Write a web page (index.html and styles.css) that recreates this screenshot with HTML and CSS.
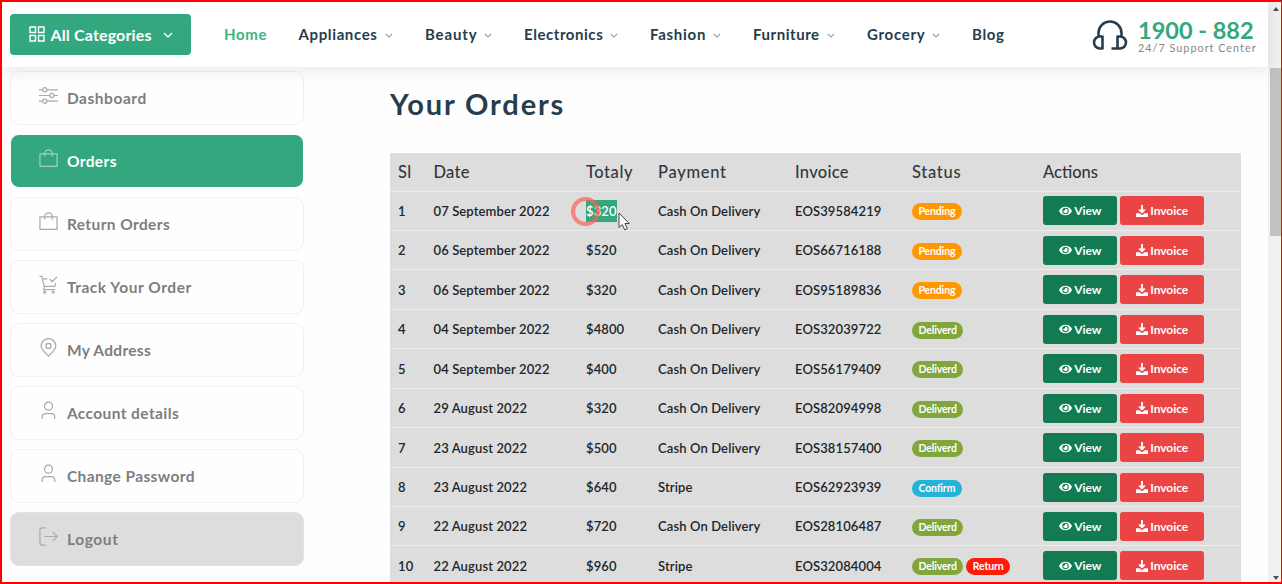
FILE: index.html
```
<!DOCTYPE html>
<html lang="en">
<head>
<meta charset="utf-8">
<title>Your Orders</title>
<link rel="stylesheet" href="styles.css">
</head>
<body>
<svg class="defs" aria-hidden="true">
  <symbol id="chev" viewBox="0 0 10 6"><path d="M1 1l4 4 4-4"/></symbol>
  <symbol id="bag" viewBox="0 0 20 20"><path d="M1 5.200h18v13.200H1zM6 8V4.800a4 4 0 0 1 8 0V8"/></symbol>
  <symbol id="user" viewBox="0 0 20 20"><circle cx="10" cy="5.400" r="4.200"/><path d="M3.400 19v-2.200q0-3.600 3.600-3.600h6q3.600 0 3.600 3.600V19"/></symbol>
  <symbol id="eye" viewBox="0 0 576 512"><path d="M572.500 241.400C518.300 135.600 410.900 64 288 64S57.700 135.600 3.500 241.400a32.400 32.400 0 0 0 0 29.200C57.700 376.400 165.100 448 288 448s230.300-71.600 284.500-177.400a32.400 32.400 0 0 0 0-29.200zM288 400a144 144 0 1 1 144-144 143.900 143.900 0 0 1-144 144zm0-240a95.300 95.300 0 0 0-25.300 3.800 47.900 47.900 0 0 1-66.900 66.900A95.800 95.800 0 1 0 288 160z"/></symbol>
  <symbol id="down" viewBox="0 0 512 512"><path d="M216 0h80v190h88c18 0 27 21 14 34L273 349c-9 9-25 9-34 0L114 224c-13-13-4-34 14-34h88zM0 352h150l55 50c28 27 74 27 102 0l55-50h150v136q0 24-24 24H24q-24 0-24-24z"/></symbol>
</svg>
<div class="page">
  <div class="main">
    <header class="header">
      <button class="categories">
        <svg class="grid-icon" viewBox="0 0 16 16"><path d="M1 1h5.500v5.500H1zM9.500 1H15v5.500H9.500zM1 9.500h5.500V15H1zM9.500 9.500H15V15H9.500z"/></svg>
        <span>All Categories</span><svg class="chev chev-lg"><use href="#chev"/></svg>
      </button>
      <nav class="nav">
        <a class="active ls6">Home</a>
        <a class="ls6">Appliances<svg class="chev"><use href="#chev"/></svg></a>
        <a class="ls8">Beauty<svg class="chev"><use href="#chev"/></svg></a>
        <a class="ls5">Electronics<svg class="chev"><use href="#chev"/></svg></a>
        <a class="ls7">Fashion<svg class="chev"><use href="#chev"/></svg></a>
        <a class="ls5">Furniture<svg class="chev"><use href="#chev"/></svg></a>
        <a class="ls7">Grocery<svg class="chev"><use href="#chev"/></svg></a>
        <a class="ls6">Blog</a>
      </nav>
      <div class="support">
        <svg class="headset" viewBox="0 0 36 32"><path d="M6.500 16.500V13a11.500 11.500 0 0 1 23 0v3.500M10.500 16.500v12H8a6 6 0 0 1 0-12zM25.500 28.500v-12H28a6 6 0 0 1 0 12H19.500"/></svg>
        <div class="support-text"><strong>1900 - 882</strong><small>24/7 Support Center</small></div>
      </div>
    </header>
    <div class="content">
      <aside class="menu">
        <a class="ls5"><svg viewBox="0 0 20 20"><path d="M0 4h3.800M8.200 4H20M0 10h11.300M15.700 10H20M0 16h3.800M8.200 16H20"/><circle cx="6" cy="4" r="2.200"/><circle cx="13.500" cy="10" r="2.200"/><circle cx="6" cy="16" r="2.200"/></svg>Dashboard</a>
        <a class="current ls4"><svg><use href="#bag"/></svg>Orders</a>
        <a class="ls4"><svg><use href="#bag"/></svg>Return Orders</a>
        <a class="ls5"><svg viewBox="0 0 20 20"><path d="M.5 1.500H3L5.500 12h11l1.300-4M3.600 4h5.200M11.500 4.500l2.500 2.400L19 2M5.500 12l-.6 3.300h12"/><circle cx="6" cy="18" r="1"/><circle cx="15" cy="18" r="1"/></svg>Track Your Order</a>
        <a class="ls3"><svg viewBox="0 0 20 20"><path d="M10 19C7 16 2.300 12 2.300 8.300a7.700 7.700 0 0 1 15.400 0C17.700 12 13 16 10 19z"/><circle cx="10" cy="8.300" r="2.700"/></svg>My Address</a>
        <a class="ls4"><svg><use href="#user"/></svg>Account details</a>
        <a class="ls4"><svg><use href="#user"/></svg>Change Password</a>
        <a class="logout ls6"><svg viewBox="0 0 20 20"><path d="M7 1H3.500Q1 1 1 3.500v13Q1 19 3.500 19H7M5.500 10H19M14.500 5.300L19.200 10l-4.700 4.700"/></svg>Logout</a>
      </aside>
      <section class="orders">
        <h1>Your Orders</h1>
        <table>
          <colgroup><col class="c1"><col class="c2"><col class="c3"><col class="c4"><col class="c5"><col class="c6"><col class="c7"></colgroup>
          <thead><tr><th class="ls5">Sl</th><th class="ls3">Date</th><th class="ls5">Totaly</th><th class="ls7">Payment</th><th class="ls3">Invoice</th><th class="ls7">Status</th><th>Actions</th></tr></thead>
          <tbody id="rows"></tbody>
        </table>
      </section>
    </div>
  </div>
  <div class="scrollbar"><i class="up"></i><i class="thumb"></i><i class="dn"></i></div>
  <i class="click-ring"></i>
  <svg class="cursor" viewBox="0 0 12 19"><path d="M1 1v14.500l3.300-3 2.400 5.400 2.600-1.200-2.400-5.200h4.400z"/></svg>
</div>
<script src="orders.js"></script>
</body>
</html>
```
FILE: styles.css
```
* { box-sizing: border-box; }
body { margin: 0; overflow: hidden; font-family: Lato, "Liberation Sans", sans-serif; }
.defs { position: absolute; width: 0; height: 0; }
svg { fill: none; stroke: currentColor; flex: none; }
.ls3 { letter-spacing: .3px; } .ls4 { letter-spacing: .4px; } .ls5 { letter-spacing: .55px; }
.ls6 { letter-spacing: .63px; } .ls7 { letter-spacing: .72px; } .ls8 { letter-spacing: .85px; }
.page { position: relative; width: 1282px; height: 584px; border: solid #f00; border-width: 2px 1px 2px 2px; display: flex; overflow: hidden; background: #fefefe; }
.main { width: 1266px; }
.header { position: relative; height: 65px; display: flex; align-items: center; background: #fff; box-shadow: 0 2px 16px rgba(60,50,80,.13); }
.categories { width: 181px; height: 41px; margin-left: 8px; padding: 0 0 1px 19px; border: 0; border-radius: 4px; background: #33a77d; color: #fff; display: flex; align-items: center; font: 700 16px Lato, sans-serif; letter-spacing: .15px; }
.grid-icon { width: 16px; height: 16px; margin-right: 5.500px; stroke-width: 1.400; }
.categories span { width: 102px; text-align: left; white-space: nowrap; }
.chev { width: 8px; height: 5px; color: #8d949c; stroke-width: 1.300; margin-top: 4px; }
.chev-lg { width: 10px; height: 6px; color: #fff; margin-left: 10px; margin-top: 2px; }
.nav { margin: 0 0 2px 33px; display: grid; grid-template-columns: 74.500px 126.500px 99px 126px 103px 114px 105px 60px; color: #253d4e; font-size: 15px; font-weight: 700; }
.nav a { display: flex; align-items: center; gap: 7px; white-space: nowrap; }
.nav .active { color: #3bb77e; }
.support { margin-left: 60px; display: flex; align-items: center; }
.headset { width: 36px; height: 32px; margin-top: 2px; color: #253d4e; stroke-width: 2.600; stroke-linejoin: round; }
.support-text { margin: -1px 0 0 10px; display: flex; flex-direction: column; white-space: nowrap; }
.support strong { font-size: 23.500px; line-height: 26px; color: #33a77d; }
.support small { font-size: 10.800px; line-height: 9px; letter-spacing: 1.020px; color: #888; }
.content { display: flex; }
.menu { width: 294px; margin: 4px 0 0 8.400px; display: flex; flex-direction: column; gap: 9.500px; }
.menu a { height: 53.500px; border: 1px solid #f2f0f2; border-radius: 9px; padding: 1px 0 0 27.500px; display: flex; align-items: center; color: #7e7e7e; font-size: 15.500px; font-weight: 700; white-space: nowrap; }
.menu svg { width: 19px; height: 19px; margin: -6px 9px 0 0; color: #aaa; stroke-width: 1.300; }
.menu .current { background: #33a77d; border-color: #fefefe; color: #fff; }
.menu .current svg { color: #98d3bd; }
.menu .logout { background: #ddd; border-color: #e2e2e2; }
.orders { margin-left: 85.600px; }
h1 { margin: 18px 0 30.500px; font-size: 29px; line-height: 37px; font-weight: 700; letter-spacing: 1.850px; color: #253d4e; }
table { width: 851px; table-layout: fixed; border-collapse: separate; border-spacing: 0; background: #ddd; color: #212529; }
.c1 { width: 35.500px; } .c2 { width: 152.500px; } .c3 { width: 72px; } .c4 { width: 137px; } .c5 { width: 117px; } .c6 { width: 131px; } .c7 { width: 206px; }
th, td { padding: 0 8px; text-align: left; white-space: nowrap; border-bottom: 1px solid #ececec; }
th { height: 39px; font-size: 16.500px; font-weight: 500; color: #34383c; }
td { height: 39.450px; padding-top: .5px; font-size: 13px; font-weight: 600; letter-spacing: .12px; }
.status, .actions { display: flex; gap: 3px; }
.status { padding-top: 2px; }
.badge { height: 17px; padding: 0 6.500px; border-radius: 9px; color: #fff; font-size: 10.500px; line-height: 17px; font-weight: 700; letter-spacing: -.15px; }
.btn { height: 29px; width: 83.500px; border-radius: 3px; color: #fff; background: #ea4444; display: flex; align-items: center; justify-content: center; gap: 2px; font-size: 12px; font-weight: 700; letter-spacing: -.05px; }
.btn.view { width: 74.500px; background: #127b52; }
.btn svg { width: 12px; height: 12px; fill: currentColor; stroke: none; }
.btn.view svg { width: 13px; }
.pending { background: #ff9800; } .deliverd { background: #80a63c; } .confirm { background: #24b3da; } .return { background: #ff1a0a; }
.selected { background: #33a77d; color: #fff; display: inline-block; height: 22px; line-height: 22px; }
.scrollbar { width: 13px; background: #f1f1f1; display: flex; flex-direction: column; align-items: center; }
.scrollbar i { display: block; }
.up { border: solid transparent; border-width: 0 3.500px 4px; border-bottom-color: #505050; margin: 5px 0 57px 2px; }
.thumb { width: 11px; height: 168px; background: #c1c1c1; margin-left: 2px; }
.dn { border: solid transparent; border-width: 4px 3.500px 0; border-top-color: #505050; margin: auto 0 2px 2px; }
.click-ring { position: absolute; left: 569px; top: 195px; width: 29px; height: 29px; border: 4px solid rgba(246,100,88,.72); border-radius: 50%; filter: blur(.7px); }
.cursor { position: absolute; left: 616px; top: 210px; width: 12px; height: 19px; fill: #fff; color: #444; }
```
FILE: orders.js
```
const D = 'Cash On Delivery';
const orders = [
  ['07 September 2022', '$320', D, 'EOS39584219', ['Pending']],
  ['06 September 2022', '$520', D, 'EOS66716188', ['Pending']],
  ['06 September 2022', '$320', D, 'EOS95189836', ['Pending']],
  ['04 September 2022', '$4800', D, 'EOS32039722', ['Deliverd']],
  ['04 September 2022', '$400', D, 'EOS56179409', ['Deliverd']],
  ['29 August 2022', '$320', D, 'EOS82094998', ['Deliverd']],
  ['23 August 2022', '$500', D, 'EOS38157400', ['Deliverd']],
  ['23 August 2022', '$640', 'Stripe', 'EOS62923939', ['Confirm']],
  ['22 August 2022', '$720', D, 'EOS28106487', ['Deliverd']],
  ['22 August 2022', '$960', 'Stripe', 'EOS32084004', ['Deliverd', 'Return']]
];
document.getElementById('rows').innerHTML = orders.map(([date, total, pay, inv, st], i) => `<tr>
<td>${i + 1}</td><td>${date}</td><td>${i ? total : `<span class="selected">${total}</span>`}</td><td>${pay}</td><td>${inv}</td>
<td><div class="status">${st.map(s => `<span class="badge ${s.toLowerCase()}">${s}</span>`).join('')}</div></td>
<td><div class="actions"><a class="btn view"><svg><use href="#eye"/></svg>View</a><a class="btn"><svg><use href="#down"/></svg>Invoice</a></div></td></tr>`).join('');
```
